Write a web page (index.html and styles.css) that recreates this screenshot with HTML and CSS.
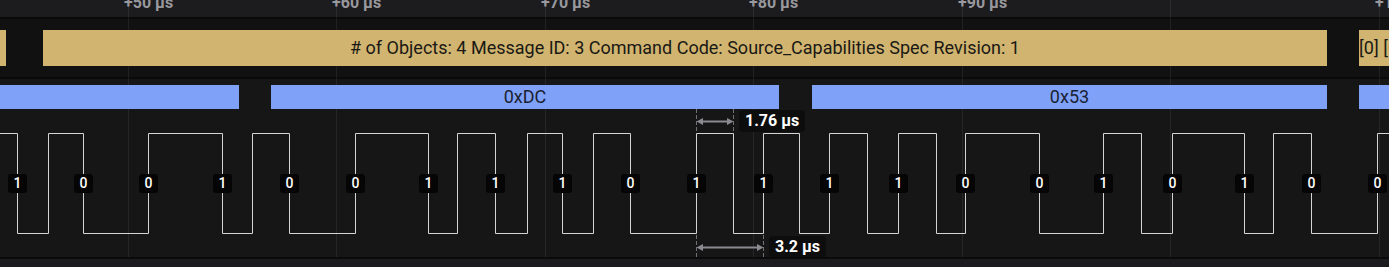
FILE: index.html
```html
<!DOCTYPE html>
<html lang="en">
<head>
    <meta charset="UTF-8">
    <title>Logic Capture</title>
    <link rel="stylesheet" href="styles.css">
</head>
<body>
    <div class="view">
        <!-- Zeitachse -->
        <div class="ruler">
            <span class="tick-label" style="left:124px">+50 µs</span>
            <span class="tick-label" style="left:332px">+60 µs</span>
            <span class="tick-label" style="left:541px">+70 µs</span>
            <span class="tick-label" style="left:749px">+80 µs</span>
            <span class="tick-label" style="left:958px">+90 µs</span>
            <span class="tick-label" style="left:1375px">+100 µs</span>
        </div>

        <!-- USB PD Frames -->
        <div class="track track-frames">
            <div class="frame" style="left:-20px;width:26px"></div>
            <div class="frame" style="left:43px;width:1284px"># of Objects: 4 Message ID: 3 Command Code: Source_Capabilities Spec Revision: 1</div>
            <div class="frame frame-cut" style="left:1359px;width:80px">[0] [0] [0]</div>
        </div>

        <!-- Bytes + Signal -->
        <div class="track track-signal">
            <div class="byte" style="left:-20px;width:259px"></div>
            <div class="byte" style="left:271px;width:508px">0xDC</div>
            <div class="byte" style="left:812px;width:515px">0x53</div>
            <div class="byte" style="left:1359px;width:60px"></div>

            <svg class="wave" width="1389" height="178" viewBox="0 0 1389 178">
                <polyline class="signal" points="0,54.5 17.5,54.5 17.5,154.5 48.5,154.5 48.5,54.5 83.5,54.5 83.5,154.5 148.5,154.5 148.5,54.5 222.5,54.5 222.5,154.5 252.5,154.5 252.5,54.5 289.5,54.5 289.5,154.5 355.5,154.5 355.5,54.5 428.5,54.5 428.5,154.5 457.5,154.5 457.5,54.5 495.5,54.5 495.5,154.5 527.5,154.5 527.5,54.5 562.5,54.5 562.5,154.5 593.5,154.5 593.5,54.5 630.5,54.5 630.5,154.5 696.5,154.5 696.5,54.5 733.5,54.5 733.5,154.5 763.5,154.5 763.5,54.5 799.5,54.5 799.5,154.5 829.5,154.5 829.5,54.5 867.5,54.5 867.5,154.5 898.5,154.5 898.5,54.5 936.5,54.5 936.5,154.5 965.5,154.5 965.5,54.5 1039.5,54.5 1039.5,154.5 1103.5,154.5 1103.5,54.5 1141.5,54.5 1141.5,154.5 1172.5,154.5 1172.5,54.5 1244.5,54.5 1244.5,154.5 1273.5,154.5 1273.5,54.5 1311.5,54.5 1311.5,154.5 1377.5,154.5 1377.5,54.5 1389,54.5"/>

                <!-- Messung 1.76 µs -->
                <line class="dash" x1="696.5" y1="30" x2="696.5" y2="53"/>
                <line class="dash" x1="733.5" y1="30" x2="733.5" y2="53"/>
                <line class="arrow" x1="700" y1="42.5" x2="730" y2="42.5"/>
                <polygon class="head" points="696.5,42.5 703,39 703,46"/>
                <polygon class="head" points="733.5,42.5 727,39 727,46"/>

                <!-- Messung 3.2 µs -->
                <line class="dash" x1="696.5" y1="156" x2="696.5" y2="178"/>
                <line class="dash" x1="763.5" y1="156" x2="763.5" y2="178"/>
                <line class="arrow" x1="700" y1="168.5" x2="760" y2="168.5"/>
                <polygon class="head" points="696.5,168.5 703,165 703,172"/>
                <polygon class="head" points="763.5,168.5 757,165 757,172"/>
            </svg>

            <span class="bit" style="left:17px">1</span>
            <span class="bit" style="left:83px">0</span>
            <span class="bit" style="left:148px">0</span>
            <span class="bit" style="left:222px">1</span>
            <span class="bit" style="left:289px">0</span>
            <span class="bit" style="left:355px">0</span>
            <span class="bit" style="left:428px">1</span>
            <span class="bit" style="left:495px">1</span>
            <span class="bit" style="left:562px">1</span>
            <span class="bit" style="left:630px">0</span>
            <span class="bit" style="left:696px">1</span>
            <span class="bit" style="left:763px">1</span>
            <span class="bit" style="left:829px">1</span>
            <span class="bit" style="left:898px">1</span>
            <span class="bit" style="left:965px">0</span>
            <span class="bit" style="left:1039px">0</span>
            <span class="bit" style="left:1103px">1</span>
            <span class="bit" style="left:1172px">0</span>
            <span class="bit" style="left:1244px">1</span>
            <span class="bit" style="left:1311px">0</span>
            <span class="bit" style="left:1377px">0</span>

            <div class="measure-label" style="left:739px;top:31px">1.76 µs</div>
            <div class="measure-label" style="left:769px;top:157px">3.2 µs</div>
        </div>

        <div class="footer"></div>

        <!-- Rasterlinien -->
        <div class="grid">
            <i style="left:128px"></i>
            <i style="left:336px"></i>
            <i style="left:545px"></i>
            <i style="left:753px"></i>
            <i style="left:962px"></i>
            <i style="left:1170px"></i>
            <i style="left:1379px"></i>
        </div>
    </div>
</body>
</html>
```

FILE: styles.css
```css
body {
    margin: 0;
    font-family: 'Roboto', 'Liberation Sans', sans-serif;
    background-color: #1c1c1f;
    overflow: hidden;
}

.view {
    position: relative;
    width: 1389px;
    height: 267px;
}

.ruler {
    position: relative;
    height: 17px;
    background-color: #1c1c1f;
    border-bottom: 2px solid #0a0a0a;
    overflow: hidden;
}

.tick-label {
    position: absolute;
    top: -5px;
    z-index: 1;
    font-size: 16px;
    line-height: 16px;
    font-weight: bold;
    color: #98989d;
    white-space: nowrap;
}

.track {
    position: relative;
    overflow: hidden;
    border-bottom: 2px solid #0a0a0a;
}

.track-frames {
    height: 58px;
    background-color: #111112;
}

.track-signal {
    height: 178px;
    background-color: #161616;
}

.footer {
    height: 8px;
    background-color: #1c1c1f;
}

.frame {
    position: absolute;
    top: 11px;
    height: 36px;
    z-index: 1;
    background-color: #d1b46f;
    color: #1a1915;
    font-size: 18px;
    line-height: 36px;
    text-align: center;
    white-space: nowrap;
    overflow: hidden;
}

.frame-cut {
    text-align: left;
}

.byte {
    position: absolute;
    top: 6px;
    height: 24px;
    z-index: 1;
    background-color: #7fa1f8;
    color: #1a1f33;
    font-size: 18px;
    line-height: 24px;
    text-align: center;
}

.wave {
    position: absolute;
    top: 0;
    left: 0;
    z-index: 1;
}

.signal {
    fill: none;
    stroke: #d4d4d4;
    stroke-width: 1;
}

.dash {
    stroke: #707076;
    stroke-width: 1;
    stroke-dasharray: 4 2;
}

.arrow {
    stroke: #8a8a90;
    stroke-width: 2;
}

.head {
    fill: #8a8a90;
}

.bit {
    position: absolute;
    top: 95px;
    z-index: 2;
    width: 19px;
    height: 19px;
    margin-left: -9px;
    border-radius: 3px;
    background-color: #050505;
    color: #fff;
    font-size: 14px;
    font-weight: 500;
    line-height: 19px;
    text-align: center;
}

.measure-label {
    position: absolute;
    z-index: 2;
    height: 22px;
    padding: 0 6px;
    border-radius: 4px;
    background-color: #0d0d0d;
    color: #fff;
    font-size: 16px;
    font-weight: bold;
    line-height: 22px;
    white-space: nowrap;
}

.grid {
    position: absolute;
    top: 0;
    left: 0;
    width: 100%;
    height: 257px;
    z-index: 0;
}

.grid i {
    position: absolute;
    top: 0;
    bottom: 0;
    width: 1px;
    background-color: rgba(255, 255, 255, 0.07);
}
```
